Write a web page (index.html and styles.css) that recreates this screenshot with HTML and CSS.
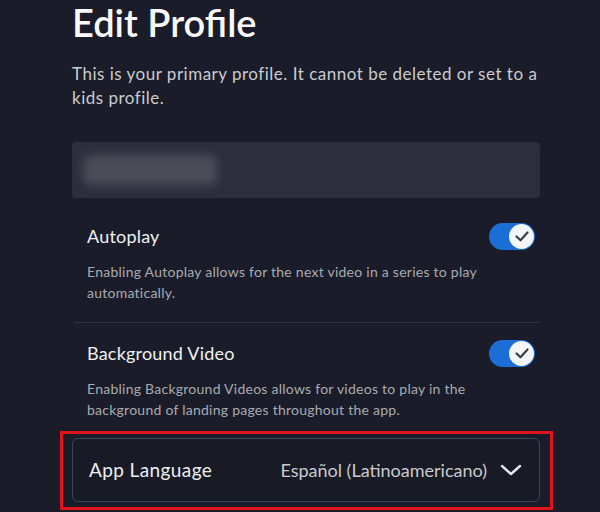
FILE: index.html
```html
<!DOCTYPE html>
<html lang="en">
<head>
<meta charset="utf-8">
<title>Edit Profile</title>
<link rel="stylesheet" href="styles.css">
</head>
<body>
<main class="page">
  <h1 class="title">Edit Profile</h1>
  <p class="subtitle">This is your primary profile. It cannot be deleted or set to a kids profile.</p>

  <div class="name-field">
    <div class="name-blur"></div>
  </div>

  <section class="setting">
    <div class="setting-head">
      <span class="setting-label">Autoplay</span>
      <span class="toggle"><span class="knob"><svg viewBox="0 0 24 24" width="24" height="24"><path d="M6.5 12.5 L10.5 16.3 L17.5 8.5" fill="none" stroke="#3b3e48" stroke-width="2.2" stroke-linecap="round" stroke-linejoin="round"/></svg></span></span>
    </div>
    <p class="setting-desc">Enabling Autoplay allows for the next video in a series to play automatically.</p>
  </section>

  <div class="divider"></div>

  <section class="setting">
    <div class="setting-head">
      <span class="setting-label">Background Video</span>
      <span class="toggle"><span class="knob"><svg viewBox="0 0 24 24" width="24" height="24"><path d="M6.5 12.5 L10.5 16.3 L17.5 8.5" fill="none" stroke="#3b3e48" stroke-width="2.2" stroke-linecap="round" stroke-linejoin="round"/></svg></span></span>
    </div>
    <p class="setting-desc">Enabling Background Videos allows for videos to play in the background of landing pages throughout the app.</p>
  </section>

  <div class="dropdown">
    <span class="dropdown-label">App Language</span>
    <span class="dropdown-value">Español (Latinoamericano)
      <svg class="chevron" viewBox="0 0 22 12" width="22" height="12"><path d="M2 2 L11 10 L20 2" fill="none" stroke="#e6e6e8" stroke-width="2.4" stroke-linecap="round" stroke-linejoin="round"/></svg>
    </span>
  </div>
</main>
</body>
</html>
```

FILE: styles.css
```css
html, body {
  margin: 0;
  padding: 0;
  background: #1a1d29;
}

body {
  font-family: "Lato", "Noto Sans", sans-serif;
  color: #f9f9f9;
  width: 600px;
  height: 512px;
  overflow: hidden;
}

.page {
  padding-left: 72px;
  width: 468px;
  display: flex;
  flex-direction: column;
}

.title {
  margin: 0;
  font-size: 38px;
  line-height: 45.6px;
  font-weight: 600;
  color: #f9f9f9;
  letter-spacing: 0;
}

.subtitle {
  margin: 16px 0 0;
  font-size: 17px;
  line-height: 24px;
  letter-spacing: 0.5px;
  color: #cacbce;
}

.name-field {
  margin-top: 32px;
  height: 56px;
  background: #2c2f3b;
  border-radius: 4px;
  padding: 13px 0 0 11px;
  box-sizing: border-box;
}

.name-blur {
  width: 134px;
  height: 30px;
  background: #4a4d58;
  border-radius: 8px;
  filter: blur(5px);
}

.setting {
  padding: 0 5px 0 15px;
}

.name-field + .setting {
  margin-top: 25px;
}

.setting-head {
  display: flex;
  align-items: center;
  justify-content: space-between;
}

.setting-label {
  font-size: 18px;
  line-height: 24px;
  letter-spacing: 0.2px;
  color: #f0f0f2;
}

.toggle {
  width: 46px;
  height: 27px;
  border-radius: 14px;
  background: #1b6ed6;
  display: flex;
  align-items: center;
  justify-content: flex-end;
  box-sizing: border-box;
  padding-right: 1px;
}

.knob {
  width: 25px;
  height: 25px;
  border-radius: 50%;
  background: #f4f5f7;
  display: flex;
  align-items: center;
  justify-content: center;
}

.setting-desc {
  margin: 11px 0 0;
  font-size: 14px;
  line-height: 21px;
  letter-spacing: 0.25px;
  color: #a9aab0;
}

.divider {
  margin: 19px 0 17px 2px;
  height: 1px;
  background: #30333e;
}

.dropdown {
  position: relative;
  margin-top: 18px;
  height: 64px;
  box-sizing: border-box;
  border: 1.5px solid #34475f;
  border-radius: 6px;
  background: #181b26;
  display: flex;
  align-items: center;
  justify-content: space-between;
  padding: 0 17px 0 16px;
}

.dropdown::after {
  content: "";
  position: absolute;
  left: -13.5px;
  right: -13.5px;
  top: -7.5px;
  bottom: -9.5px;
  border: 3px solid #e0141c;
}

.dropdown-label {
  font-size: 19px;
  letter-spacing: 0.4px;
  color: #eeeef0;
}

.dropdown-value {
  display: flex;
  align-items: center;
  gap: 13px;
  font-size: 18px;
  color: #c9cacd;
}

.chevron {
  display: block;
}
```
